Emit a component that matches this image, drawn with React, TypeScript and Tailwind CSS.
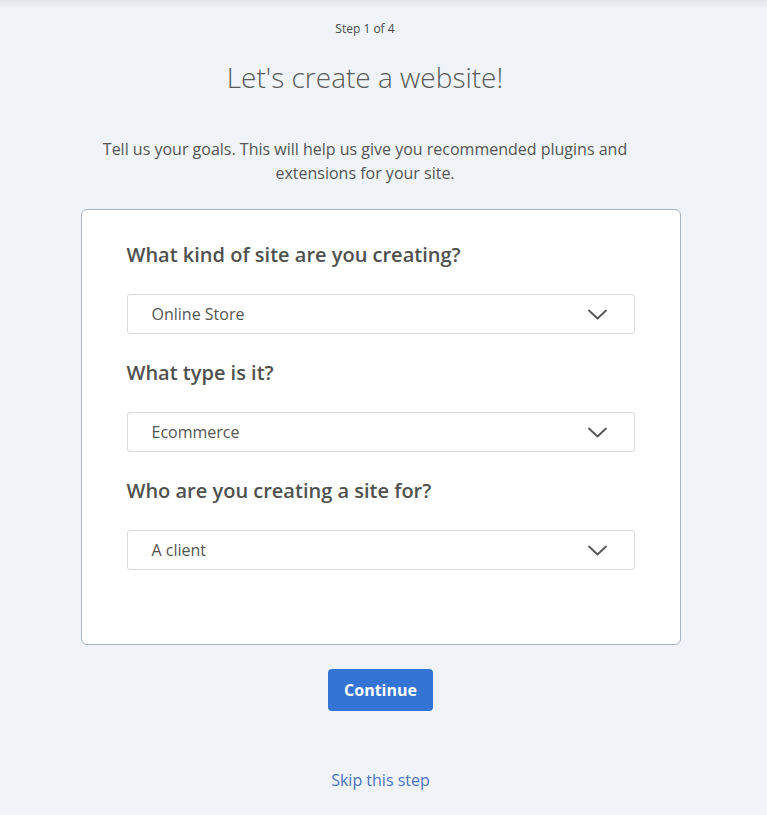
type SelectFieldProps = {
  label: string;
  value: string;
};

const SelectField = ({ label, value }: SelectFieldProps): JSX.Element => {
  return (
    <div className="flex flex-col">
      <h2 className="text-[20px] leading-[28px] font-semibold text-[#50514f] h-[28px]">{label}</h2>
      <div className="mt-[25px] flex h-[40px] items-center justify-between rounded-[3px] border border-[#d6d9dd] bg-white pl-[24px] pr-[27px]">
        <span className="text-[16px] text-[#555]">{value}</span>
        <svg width="19" height="11" viewBox="0 0 19 11" fill="none" className="text-[#555]">
          <polyline points="1,1.5 9.5,9.5 18,1.5" stroke="currentColor" strokeWidth="1.8" strokeLinecap="round" strokeLinejoin="round" />
        </svg>
      </div>
    </div>
  );
};

const App = (): JSX.Element => {
  return (
    <div className="relative min-h-[815px] bg-[#f0f4f8] font-['Open_Sans',sans-serif]">
      <div className="absolute inset-x-0 top-0 h-[8px] bg-linear-to-b from-[#e1e5ea] to-transparent" />
      <div className="flex flex-col items-center pt-[21px] pr-[6px]">
        <div className="flex flex-col items-center pr-[31px]">
          <p className="text-[12px] leading-[16px] text-[#4a4a4a]">Step 1 of 4</p>
          <h1 className="mt-[20px] text-[28px] leading-[40px] font-light text-[#5a5a5a]">Let's create a website!</h1>
          <p className="mt-[40px] w-[540px] text-center text-[16px] leading-[24px] text-[#555]">
            Tell us your goals. This will help us give you recommended plugins and extensions for your site.
          </p>
        </div>
        <div className="mt-[24px] flex h-[436px] w-[600px] flex-col gap-[25px] rounded-[6px] border border-[#a7b3c2] bg-white px-[45px] pt-[31px]">
          <SelectField label="What kind of site are you creating?" value="Online Store" />
          <SelectField label="What type is it?" value="Ecommerce" />
          <SelectField label="Who are you creating a site for?" value="A client" />
        </div>
        <button className="mt-[24px] h-[42px] w-[105px] rounded-[4px] bg-[#3474d4] text-[16px] font-bold text-white">
          Continue
        </button>
        <a href="#" className="mt-[57px] text-[16px] leading-[24px] text-[#4a72c2]">
          Skip this step
        </a>
      </div>
    </div>
  );
};

export default App;
